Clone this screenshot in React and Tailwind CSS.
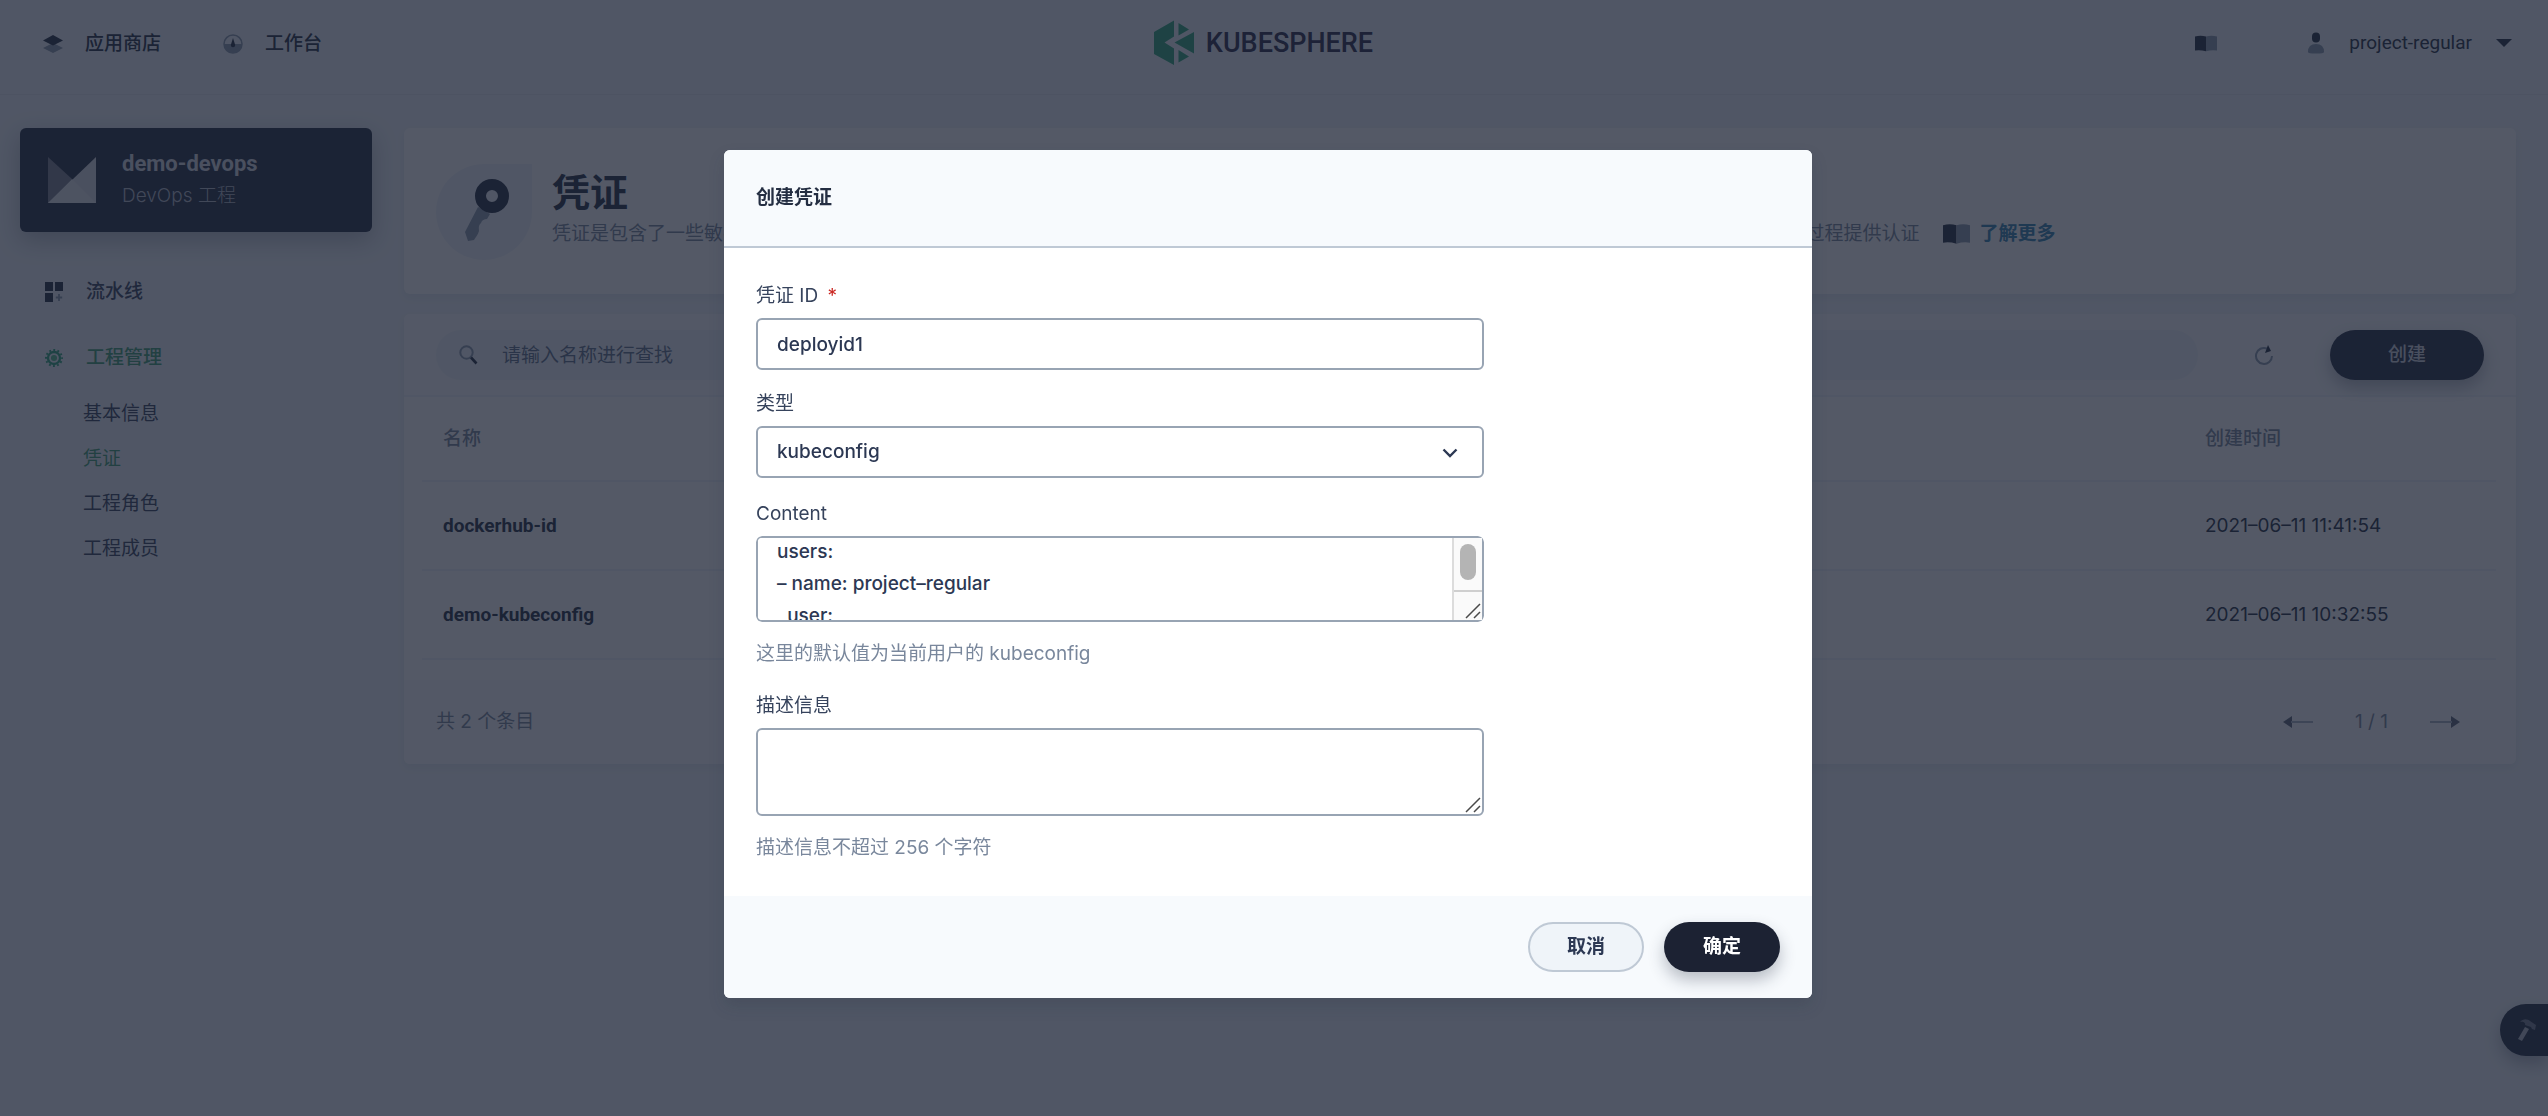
import { useLayoutEffect, useRef } from 'react';

const KUBECONFIG = `current-context: project-regular@kubernetes
kind: Config
preferences: {}
users:
– name: project–regular
  user:
    client-certificate-data: LS0tLS1CRUdJTi
    client-key-data: LS0tLS1CRUdJTiBSU0Eg
`;

const CREDENTIALS = [
  { name: 'dockerhub-id', created: '2021–06–11 11:41:54' },
  { name: 'demo-kubeconfig', created: '2021–06–11 10:32:55' },
];

const SUB_NAV = [
  { label: '基本信息' },
  { label: '凭证', active: true },
  { label: '工程角色' },
  { label: '工程成员' },
];

function BookIcon({ className }) {
  return (
    <svg viewBox="0 0 28 20" className={className} aria-hidden="true">
      <path d="M0 1q7-2 14 0v19q-7-2-14-1z" fill="#242e42" />
      <path d="M28 1q-7-2-14 0v19q7-2 14-1z" fill="#8a99ad" />
    </svg>
  );
}

function LayersIcon() {
  return (
    <svg viewBox="0 0 20 20" className="size-5" aria-hidden="true">
      <path d="M0 14l10-5 10 5-10 5z" fill="#8a99ad" />
      <path d="M0 6.500l10-5.500 10 5.500-10 5z" fill="#242e42" />
    </svg>
  );
}

function DashboardIcon() {
  return (
    <svg viewBox="0 0 20 20" className="size-5" aria-hidden="true">
      <circle cx="10" cy="10" r="9" fill="none" stroke="#8a99ad" strokeWidth="1.500" />
      <path d="M1 10h18a9 9 0 0 1-18 0z" fill="#8a99ad" />
      <path d="M10 4l2.200 7a2.200 2.200 0 1 1-4.400 0z" fill="#242e42" />
    </svg>
  );
}

function KubeSphereMark() {
  return (
    <svg viewBox="0 0 40 46" className="h-[46px] w-10" aria-hidden="true">
      <path d="M0 12L20 0.500V16.500L10.500 22.500L20 28.500V45L0 34z" fill="#2fa67c" />
      <path d="M24.500 3l10.500 6.500-10.500 6zM24.500 42.500l10.500-6-10.500-6.500zM40 12v21.500L20.500 22.500z" fill="#2fa67c" />
    </svg>
  );
}

function PersonIcon() {
  return (
    <svg viewBox="0 0 18 22" className="h-[22px] w-[18px]" aria-hidden="true">
      <rect x="5" y="0.500" width="8" height="10" rx="4" fill="#242e42" />
      <path d="M1 20q0-8 8-8t8 8q0 1.500-8 1.500T1 20z" fill="#8a99ad" />
    </svg>
  );
}

function PipelineIcon() {
  return (
    <svg viewBox="0 0 18 20" className="h-5 w-[18px]" aria-hidden="true">
      <path d="M0 0h8v9H0zM10 0h8v9h-8zM0 11h8v9H0z" fill="#242e42" />
      <path d="M14 12v7M10.800 15.500h6.400" stroke="#8a99ad" strokeWidth="1.800" />
    </svg>
  );
}

function GearIcon() {
  return (
    <svg viewBox="0 0 20 20" className="h-5 w-[18px]" aria-hidden="true">
      <circle cx="10" cy="10" r="6.700" fill="none" stroke="#2fa67c" strokeWidth="2.600" />
      <circle cx="10" cy="10" r="8.900" fill="none" stroke="#2fa67c" strokeWidth="2.200" strokeDasharray="2.100 2.560" strokeDashoffset="1.050" />
      <circle cx="10" cy="10" r="3.400" fill="#55bc8a" />
    </svg>
  );
}

function ProjectIcon() {
  return (
    <svg viewBox="0 0 48 46" className="h-[46px] w-12" aria-hidden="true">
      <path d="M0 0l24 22L0 46z" fill="#7b8090" />
      <path d="M48 0v46H0z" fill="#d8dbe2" />
      <path d="M24 22l24 24H0z" fill="#e3e6ea" />
    </svg>
  );
}

function KeyIcon() {
  return (
    <svg viewBox="0 0 46 64" className="mb-1 ml-2 h-16 w-[46px]" aria-hidden="true">
      <path d="M13 29l12 7-3 5c-3 0-5 1-6 4-3 3-2 5-2 8-1 4-4 7-5 9L3 63 0 54z" fill="#8a99ad" />
      <circle cx="27" cy="18" r="11.500" fill="none" stroke="#242e42" strokeWidth="11" />
    </svg>
  );
}

function SearchIcon() {
  return (
    <svg viewBox="0 0 20 20" className="size-5 shrink-0" aria-hidden="true">
      <circle cx="7.500" cy="7.500" r="6.200" fill="none" stroke="#8a99ad" strokeWidth="2" />
      <path d="M12 12.500l5.500 6" stroke="#242e42" strokeWidth="2.600" />
    </svg>
  );
}

function ReloadIcon() {
  return (
    <svg viewBox="0 0 20 20" className="size-5" aria-hidden="true">
      <path d="M13 3.500A8 8 0 1 0 18 11" fill="none" stroke="#8a99ad" strokeWidth="2" />
      <path d="M14 0l3 6-6 2z" fill="#242e42" />
    </svg>
  );
}

function ArrowIcon({ className }) {
  return (
    <svg viewBox="0 0 30 14" className={className} aria-hidden="true">
      <path d="M0 7l9-6v12z" fill="#5c6678" />
      <path d="M8 7h22" stroke="#a5b0c0" strokeWidth="1.800" />
    </svg>
  );
}

function HammerIcon() {
  return (
    <svg viewBox="0 0 20 24" className="ml-[17px] h-6 w-5" aria-hidden="true">
      <path d="M8 9l4 2-7 12-4-2z" fill="#b4bac6" />
      <path d="M3 4c3-4 8-3 10-1l6 4-1 5-3-1-1-2-6-2c1-2-2-4-5-3z" fill="#747d8e" />
    </svg>
  );
}

function ResizeGrip() {
  return (
    <svg viewBox="0 0 16 16" className="pointer-events-none absolute bottom-[3px] right-[3px] size-4" aria-hidden="true">
      <path d="M1 15L15 1M9 15l6-6" stroke="#4a4a4a" strokeWidth="1.500" fill="none" />
    </svg>
  );
}

function Header() {
  return (
    <header className="grid h-[95px] grid-cols-[1fr_auto_1fr] items-center border-b border-[#e3e9ef] pb-2 pl-[43px] pr-9">
      <nav className="flex items-center gap-[62px] pt-[2px] font-medium">
        <a href="#store" className="flex items-center gap-[22px]">
          <LayersIcon />
          应用商店
        </a>
        <a href="#workbench" className="flex items-center gap-[22px]">
          <DashboardIcon />
          工作台
        </a>
      </nav>
      <a href="#home" className="mr-7 flex items-center gap-3" aria-label="KubeSphere">
        <KubeSphereMark />
        <span className="font-['Roboto'] text-[27px] font-medium leading-none text-[#2b2b4a]">KUBESPHERE</span>
      </a>
      <div className="flex items-center justify-end">
        <a href="#docs" aria-label="文档" className="mr-[90px]">
          <BookIcon className="h-[17px] w-[22px]" />
        </a>
        <button type="button" className="flex items-center font-['Roboto'] text-[19px]">
          <PersonIcon />
          <span className="ml-6 mr-6">project-regular</span>
          <svg viewBox="0 0 16 8" className="h-2 w-4" aria-hidden="true">
            <path d="M0 0h16L8 8z" fill="#242e42" />
          </svg>
        </button>
      </div>
    </header>
  );
}

function Sidebar() {
  return (
    <aside className="w-[352px] shrink-0">
      <div className="flex h-[104px] items-center gap-[26px] rounded-md bg-[#242e42] px-7 shadow-[0_8px_24px_rgba(36,46,66,0.3)]">
        <ProjectIcon />
        <div className="flex flex-col">
          <span className="font-['Roboto'] text-[22px] font-bold leading-8 text-[#d8dce3]">demo-devops</span>
          <span className="font-light leading-8 text-[#b5bcc9]">DevOps 工程</span>
        </div>
      </div>
      <nav className="mt-[41px]">
        <a href="#pipelines" className="flex h-[38px] items-center gap-[23px] pl-[25px] font-medium text-[#36435c]">
          <PipelineIcon />
          流水线
        </a>
        <a href="#management" className="mt-7 flex h-[38px] items-center gap-[23px] pl-[25px] font-medium text-[#3f9f74]">
          <GearIcon />
          工程管理
        </a>
        <ul className="mt-[14px]">
          {SUB_NAV.map((item) => (
            <li key={item.label}>
              <a
                href={'#' + item.label}
                className={item.active ? 'block pl-[63px] leading-[45px] text-[#3f9f74]' : 'block pl-[63px] leading-[45px] text-[#36435c]'}
              >
                {item.label}
              </a>
            </li>
          ))}
        </ul>
      </nav>
    </aside>
  );
}

function Banner() {
  return (
    <section className="flex h-[166px] items-start gap-5 rounded-md bg-white px-8 pt-9 shadow-[0_4px_8px_rgba(36,46,66,0.06)]">
      <div className="flex size-24 items-center justify-center rounded-full rounded-tr-none bg-[#eff4f9]">
        <KeyIcon />
      </div>
      <div className="min-w-0 flex-1">
        <h1 className="text-[38px] font-semibold leading-[56px]">凭证</h1>
        <p className="flex items-center whitespace-nowrap leading-7 text-[#79879c]">
          凭证是包含了一些敏感数据的对象，例如用户名密码，SSH 密钥和 Token 等,用于在 Pipeline 运行的时候，为拉取代码、push/pull 镜像、执行脚本等过程提供认证
          <a href="#more" className="ml-[23px] flex items-center gap-[10px] font-bold text-[#3385b0]">
            <BookIcon className="h-5 w-[27px]" />
            了解更多
          </a>
        </p>
      </div>
    </section>
  );
}

function CredentialTable() {
  return (
    <section className="mt-5 overflow-hidden rounded-md bg-white shadow-[0_4px_8px_rgba(36,46,66,0.06)]">
      <div className="flex h-[83px] items-center border-b-2 border-[#eff4f9] bg-[#f9fbfd] pl-8 pr-8">
        <label className="flex h-[50px] flex-1 items-center gap-[23px] rounded-full bg-[#eff4f9] pl-[23px]">
          <SearchIcon />
          <input
            type="search"
            aria-label="查找凭证"
            placeholder="请输入名称进行查找"
            className="w-full bg-transparent pt-[2px] outline-none placeholder:text-[#5f708a]"
          />
        </label>
        <button type="button" aria-label="刷新" className="mx-14">
          <ReloadIcon />
        </button>
        <button type="button" className="h-[50px] w-[154px] rounded-full bg-[#242e42] font-medium text-[#d5d9e0] shadow-[0_8px_16px_rgba(36,46,66,0.3)]">
          创建
        </button>
      </div>
      <div className="pb-5 pl-[18px] pr-5">
        <table className="w-full table-fixed text-left">
          <thead>
            <tr className="h-[84px] border-b-2 border-[#eff4f9] text-[#79879c]">
              <th className="pl-[21px] font-medium">名称</th>
              <th className="w-[291px] font-medium">创建时间</th>
            </tr>
          </thead>
          <tbody>
            {CREDENTIALS.map((item) => (
              <tr key={item.name} className="h-[89px] border-b-2 border-[#eff4f9]">
                <td className="pl-[21px] font-['Roboto'] text-[19px] font-bold">{item.name}</td>
                <td>{item.created}</td>
              </tr>
            ))}
          </tbody>
        </table>
      </div>
      <div className="flex h-[84px] items-center justify-between bg-[#f9fbfd] pl-8 pr-[56px] text-[#79879c]">
        <span>共 2 个条目</span>
        <div className="flex items-center gap-[42px]">
          <button type="button" aria-label="上一页">
            <ArrowIcon className="h-[14px] w-[30px]" />
          </button>
          <span>1 / 1</span>
          <button type="button" aria-label="下一页">
            <ArrowIcon className="h-[14px] w-[30px] rotate-180" />
          </button>
        </div>
      </div>
    </section>
  );
}

function CreateDialog() {
  const contentRef = useRef(null);

  useLayoutEffect(() => {
    contentRef.current.scrollTop = 108;
  }, []);

  return (
    <div className="fixed inset-0 flex items-start justify-center bg-[#181f30]/74 pr-3 pt-[150px]">
      <form
        role="dialog"
        aria-modal="true"
        aria-labelledby="dialog-title"
        className="w-[1088px] max-w-full overflow-hidden rounded-md bg-white shadow-[0_8px_16px_rgba(36,46,66,0.2)]"
      >
        <header className="flex h-[98px] items-center border-b-2 border-[#bfc9d5] bg-[#f7fafd] px-8">
          <h2 id="dialog-title" className="font-bold">创建凭证</h2>
        </header>

        <div className="px-8 pb-9 pt-[35px] text-[#36435c]">
          <div className="w-[728px] max-w-full">
            <label htmlFor="credential-id" className="mb-[10px] block leading-[25px]">
              凭证 ID <span className="ml-1 text-[#ca2621]">*</span>
            </label>
            <input
              id="credential-id"
              defaultValue="deployid1"
              className="block h-[52px] w-full rounded-md border-2 border-[#98a4b3] bg-white px-[19px] font-medium text-[#2c3853] outline-none"
            />

            <label htmlFor="credential-type" className="mb-[10px] mt-[21px] block leading-[25px]">类型</label>
            <div className="relative">
              <select
                id="credential-type"
                className="block h-[52px] w-full appearance-none rounded-md border-2 border-[#98a4b3] bg-white px-[19px] font-medium text-[#2c3853] outline-none"
              >
                <option>kubeconfig</option>
              </select>
              <svg viewBox="0 0 16 10" className="pointer-events-none absolute right-[26px] top-[22px] h-[10px] w-4" aria-hidden="true">
                <path d="M1.500 1.500L8 8l6.500-6.500" fill="none" stroke="#2c3853" strokeWidth="2.400" />
              </svg>
            </div>

            <label htmlFor="credential-content" className="mb-[10px] mt-[23px] block leading-[25px]">Content</label>
            <div className="relative overflow-hidden rounded-md">
              <textarea
                id="credential-content"
                ref={contentRef}
                defaultValue={KUBECONFIG}
                className="block h-[86px] w-full resize-none rounded-md border-2 border-[#98a4b3] bg-white py-[10px] pl-[19px] pr-10 font-medium leading-8 text-[#2c3853] outline-none"
              />
              <div className="pointer-events-none absolute bottom-[2px] right-[2px] top-[2px] flex w-[30px] flex-col border-l-2 border-[#dcdcdc] bg-[#fafafa]" aria-hidden="true">
                <div className="flex-1 px-[6px] pt-[6px]">
                  <div className="h-9 rounded-full bg-[#b4b4b4]" />
                </div>
                <div className="h-[30px] border-t-2 border-[#cfcfcf]" />
              </div>
              <ResizeGrip />
            </div>
            <p className="mt-[19px] leading-[25px] text-[#79879c]">这里的默认值为当前用户的 kubeconfig</p>

            <label htmlFor="credential-description" className="mb-[10px] mt-[27px] block leading-[25px]">描述信息</label>
            <div className="relative">
              <textarea
                id="credential-description"
                className="block h-[88px] w-full resize-none rounded-md border-2 border-[#98a4b3] bg-white px-[19px] py-[10px] outline-none"
              />
              <ResizeGrip />
            </div>
            <p className="mt-[19px] leading-[25px] text-[#79879c]">描述信息不超过 256 个字符</p>
          </div>
        </div>

        <footer className="flex h-[102px] items-center justify-end gap-5 bg-[#f7fafd] px-8">
          <button type="button" className="h-[50px] w-[116px] rounded-full border-2 border-[#bfc9d5] bg-[#eff4f9] font-bold text-[#2c3853]">
            取消
          </button>
          <button type="button" className="h-[50px] w-[116px] rounded-full bg-[#1c2233] font-bold text-white shadow-[0_8px_16px_rgba(36,46,66,0.3)]">
            确定
          </button>
        </footer>
      </form>
    </div>
  );
}

export default function App() {
  return (
    <div className="relative min-h-screen overflow-hidden bg-[#eff4f9] font-['Inter','Noto_Sans_CJK_SC',sans-serif] text-[19px] leading-7 text-[#242e42]">
      <Header />
      <div className="flex gap-8 pl-5 pr-8 pt-[33px]">
        <Sidebar />
        <main className="min-w-0 flex-1">
          <Banner />
          <CredentialTable />
        </main>
      </div>
      <button type="button" aria-label="工具箱" className="fixed bottom-[60px] right-0 flex h-[52px] w-12 items-center rounded-l-full bg-[#242e42] shadow-[0_8px_16px_rgba(36,46,66,0.3)]">
        <HammerIcon />
      </button>
      <CreateDialog />
    </div>
  );
}
